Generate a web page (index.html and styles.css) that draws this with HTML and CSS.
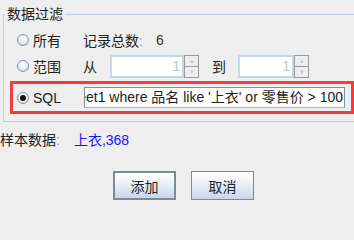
FILE: index.html
```html
<!DOCTYPE html>
<html>
<head>
<meta charset="utf-8">
<link rel="stylesheet" href="styles.css">
</head>
<body>
<fieldset class="group">
  <legend class="legend">数据过滤</legend>
  <div class="row row-all">
    <label class="opt"><span class="radio"></span><span class="opt-text">所有</span></label>
    <span class="txt">记录总数<span class="colon">:</span></span>
    <span class="count">6</span>
  </div>
  <div class="row row-range">
    <label class="opt"><span class="radio"></span><span class="opt-text">范围</span></label>
    <span class="txt">从</span>
    <div class="spinner spin-from">
      <div class="spin-field">1</div>
      <div class="spin-btns"><span class="spin-btn">&#9652;</span><span class="spin-btn">&#9662;</span></div>
    </div>
    <span class="txt to">到</span>
    <div class="spinner spin-to">
      <div class="spin-field">1</div>
      <div class="spin-btns"><span class="spin-btn">&#9652;</span><span class="spin-btn">&#9662;</span></div>
    </div>
  </div>
  <div class="row-sql">
    <label class="opt"><span class="radio checked"></span><span class="opt-text latin">SQL</span></label>
    <div class="sql-field"><span class="sql-text">select * from sheet1 where 品名 like '上衣' or 零售价 &gt; 100</span></div>
  </div>
</fieldset>
<div class="sample">
  <span class="txt">样本数据<span class="colon">:</span></span>
  <span class="sample-val">上衣,368</span>
</div>
<div class="actions">
  <button class="btn btn-default">添加</button>
  <button class="btn">取消</button>
</div>
</body>
</html>
```

FILE: styles.css
```css
html, body {
  margin: 0;
  padding: 0;
  background: #eeeeee;
  width: 354px;
  height: 206px;
  overflow: hidden;
}
body {
  font-family: "Liberation Sans", "Noto Sans CJK SC", sans-serif;
  font-size: 14px;
  color: #222;
}
.group {
  margin: 0 -30px 0 3px;
  padding: 0 0 7px 0;
  border: 1px solid #b8cfe5;
  min-width: 0;
}
.legend {
  margin-left: 1px;
  padding: 0 2px;
  line-height: 28px;
  height: 28px;
}
.row {
  display: flex;
  align-items: center;
  height: 24px;
  padding-left: 13px;
}
.row-range {
  margin-top: 2px;
}
.opt {
  display: flex;
  align-items: center;
  width: 66px;
  flex: none;
}
.radio {
  width: 10px;
  height: 10px;
  border: 1px solid #8094ab;
  border-radius: 50%;
  background: radial-gradient(circle at 50% 35%, #ffffff 0%, #eef3f9 45%, #b9cde3 100%);
  flex: none;
  position: relative;
}
.radio.checked::after {
  content: "";
  position: absolute;
  left: 2px;
  top: 2px;
  width: 6px;
  height: 6px;
  border-radius: 50%;
  background: #111;
}
.opt-text {
  margin-left: 4px;
}
.colon {
  color: #8aa0b8;
}
.count {
  margin-left: 13px;
  color: #333;
}
.spinner {
  display: flex;
  height: 23px;
  margin-left: 13px;
}
.spin-from .spin-field { width: 68px; }
.spin-to .spin-field { width: 50px; }
.spin-to { margin-left: 12px; }
.to { margin-left: 13px; }
.spin-field {
  border: 2px solid #c4d7ea;
  background: #fff;
  color: #bcc6d0;
  text-align: right;
  line-height: 19px;
  padding-right: 2px;
}
.spin-btns {
  display: flex;
  flex-direction: column;
  width: 15px;
}
.spin-btn {
  flex: 1;
  border: 1px solid #9a9a9a;
  background: #eeeeee;
  color: #c0c8d0;
  font-size: 7px;
  line-height: 9px;
  text-align: center;
}
.spin-btn + .spin-btn {
  border-top: 0;
}
.row-sql {
  display: flex;
  align-items: center;
  height: 27px;
  margin: 3px 0 0 6px;
  border: 3px solid #f23b3b;
  padding-left: 4px;
  width: 334px;
}
.row-sql .opt {
  width: 67px;
}
.latin {
  font-family: "Liberation Sans", sans-serif;
}
.sql-field {
  display: flex;
  justify-content: flex-end;
  width: 259px;
  height: 19px;
  border: 1px solid #7f8fa0;
  border-bottom-color: #a8b4c0;
  background: #fff;
  overflow: hidden;
  white-space: nowrap;
  line-height: 19px;
}
.sql-text {
  padding-right: 1px;
  color: #222;
}
.sample {
  display: flex;
  margin-top: 9px;
  line-height: 18px;
}
.sample-val {
  margin-left: 14px;
  color: #1414ff;
}
.actions {
  display: flex;
  margin-top: 22px;
  padding-left: 113px;
  gap: 15px;
}
.btn {
  width: 63px;
  height: 29px;
  border: 1px solid #7b8b9b;
  background: linear-gradient(#ffffff 0%, #f2f6fa 30%, #c6d7ea 100%);
  font-family: "Noto Sans CJK SC", sans-serif;
  font-size: 14px;
  color: #222;
  padding: 0;
}
.btn-default {
  border: 2px solid #7b8b9b;
}
```
